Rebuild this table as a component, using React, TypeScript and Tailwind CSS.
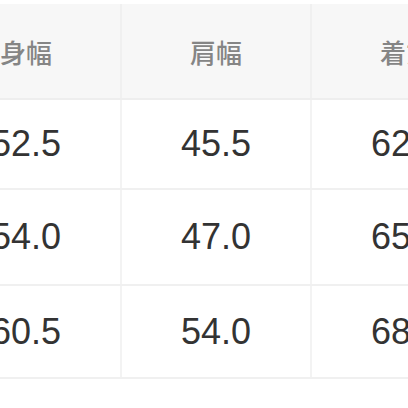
const headers = ["身幅", "肩幅", "着丈"];

const rows = [
  { h: "h-[90px]", cells: ["52.5", "45.5", "62.5"] },
  { h: "h-[96px]", cells: ["54.0", "47.0", "65.0"] },
  { h: "h-[93px]", cells: ["60.5", "54.0", "68.0"] },
];

export default function App() {
  return (
    <div className="w-[408px] h-[408px] overflow-hidden bg-white pt-[4px]">
      <div className="ml-[-68px] w-[570px]">
        <div className="grid grid-cols-[190px_190px_190px] h-[96px] bg-[#f7f7f7] border-b-2 border-[#eeeeee]">
          {headers.map((t, i) => (
            <div
              key={i}
              className="flex items-center justify-center border-r-2 border-[#f0f0f0] text-[26px] font-medium text-[#858585] font-['Noto_Sans_CJK_JP',sans-serif]"
            >
              {t}
            </div>
          ))}
        </div>
        {rows.map((r, ri) => (
          <div
            key={ri}
            className={`grid grid-cols-[190px_190px_190px] ${r.h} border-b-2 border-[#f0f0f0]`}
          >
            {r.cells.map((c, ci) => (
              <div
                key={ci}
                className="flex items-center justify-center border-r-2 border-[#f3f3f3] text-[36px] text-[#333333] font-['Liberation_Sans',Arial,sans-serif]"
              >
                {c}
              </div>
            ))}
          </div>
        ))}
      </div>
    </div>
  );
}
